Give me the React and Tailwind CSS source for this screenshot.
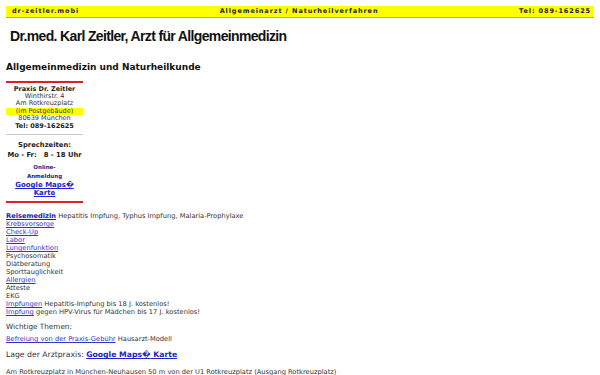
const links = 'text-[#3333cc] underline';

export default function App() {
  return (
    <div className="w-[600px] h-[375px] overflow-hidden bg-white px-[6px] pt-[6px] font-['DejaVu_Sans',sans-serif] text-[#333]">
      {/* top bar */}
      <div className="flex justify-between items-center h-[12px] bg-[#ffff00] border-b border-[#a8a890] pl-[6px] pr-[3px] text-[6.5px] font-bold tracking-[0.9px] text-[#222]">
        <span>dr-zeitler.mobi</span>
        <span>Allgemeinarzt / Naturheilverfahren</span>
        <span>Tel: 089-162625</span>
      </div>

      <h1 className="mt-[10px] ml-[4px] text-[14px] leading-[16px] font-bold tracking-[-0.65px] font-['Liberation_Sans',sans-serif] text-[#111]">
        Dr.med. Karl Zeitler, Arzt für Allgemeinmedizin
      </h1>

      <h2 className="mt-[18px] text-[9px] leading-[11px] font-bold text-[#111]">
        Allgemeinmedizin und Naturheilkunde
      </h2>

      {/* address box */}
      <div className="w-[77px] mt-[8px] text-center">
        <div className="h-[2px] bg-[#e02020]"></div>
        <div className="pt-[3px] text-[6.5px] leading-[7.2px]">
          <div className="font-bold text-[#222]">Praxis Dr. Zeitler</div>
          <div>Winthirstr. 4</div>
          <div>Am Rotkreuzplatz</div>
          <div className="bg-[#ffff00]">(im Postgebäude)</div>
          <div>80639 München</div>
          <div className="font-bold text-[#222] mt-[1px]">Tel: 089-162625</div>
        </div>
        <div className="h-px bg-[#cccccc] mt-[4px]"></div>
        <div className="pt-[5px] text-[6.8px] leading-[10px] font-bold text-[#222]">
          <div>Sprechzeiten:</div>
          <div className="whitespace-pre">Mo - Fr:   8 - 18 Uhr</div>
        </div>
        <div className="mt-[3px] text-[5.5px] leading-[9px] font-bold text-[#22228f]">
          <div>Online-</div>
          <div>Anmeldung</div>
        </div>
        <div className="text-[7px] leading-[8px] font-bold text-[#2222cc] underline">
          <div>Google Maps{'\uFFFD'}</div>
          <div>Karte</div>
        </div>
        <div className="h-[2px] bg-[#e02020] mt-[4px]"></div>
      </div>

      {/* services */}
      <div className="mt-[9px] text-[6.7px] leading-[8px]">
        <div><a className="font-bold text-[#2222aa] underline">Reisemedizin</a> Hepatitis Impfung, Typhus Impfung, Malaria-Prophylaxe</div>
        <div><a className={links}>Krebsvorsorge</a></div>
        <div><a className={links}>Check-Up</a></div>
        <div><a className={links}>Labor</a></div>
        <div><a className={links}>Lungenfunktion</a></div>
        <div>Psychosomatik</div>
        <div>Diätberatung</div>
        <div>Sporttauglichkeit</div>
        <div><a className={links}>Allergien</a></div>
        <div>Atteste</div>
        <div>EKG</div>
        <div><a className={links}>Impfungen</a> Hepatitis-Impfung bis 18 J. kostenlos!</div>
        <div><a className={links}>Impfung</a> gegen HPV-Virus für Mädchen bis 17 J. kostenlos!</div>
      </div>

      <p className="mt-[6px] text-[7.25px] leading-[10px]">Wichtige Themen:</p>
      <p className="mt-[3px] text-[6.7px] leading-[8px]">
        <a className={links}>Befreiung von der Praxis-Gebühr</a> Hausarzt-Modell
      </p>
      <p className="mt-[7px] text-[7.7px] leading-[10px]">
        Lage der Arztpraxis: <a className="font-bold text-[#2222cc] underline">Google Maps{'\uFFFD'} Karte</a>
      </p>
      <p className="mt-[8px] text-[6.7px] leading-[8px]">
        Am Rotkreuzplatz in München-Neuhausen 50 m von der U1 Rotkreuzplatz (Ausgang Rotkreuzplatz)
      </p>
    </div>
  );
}
